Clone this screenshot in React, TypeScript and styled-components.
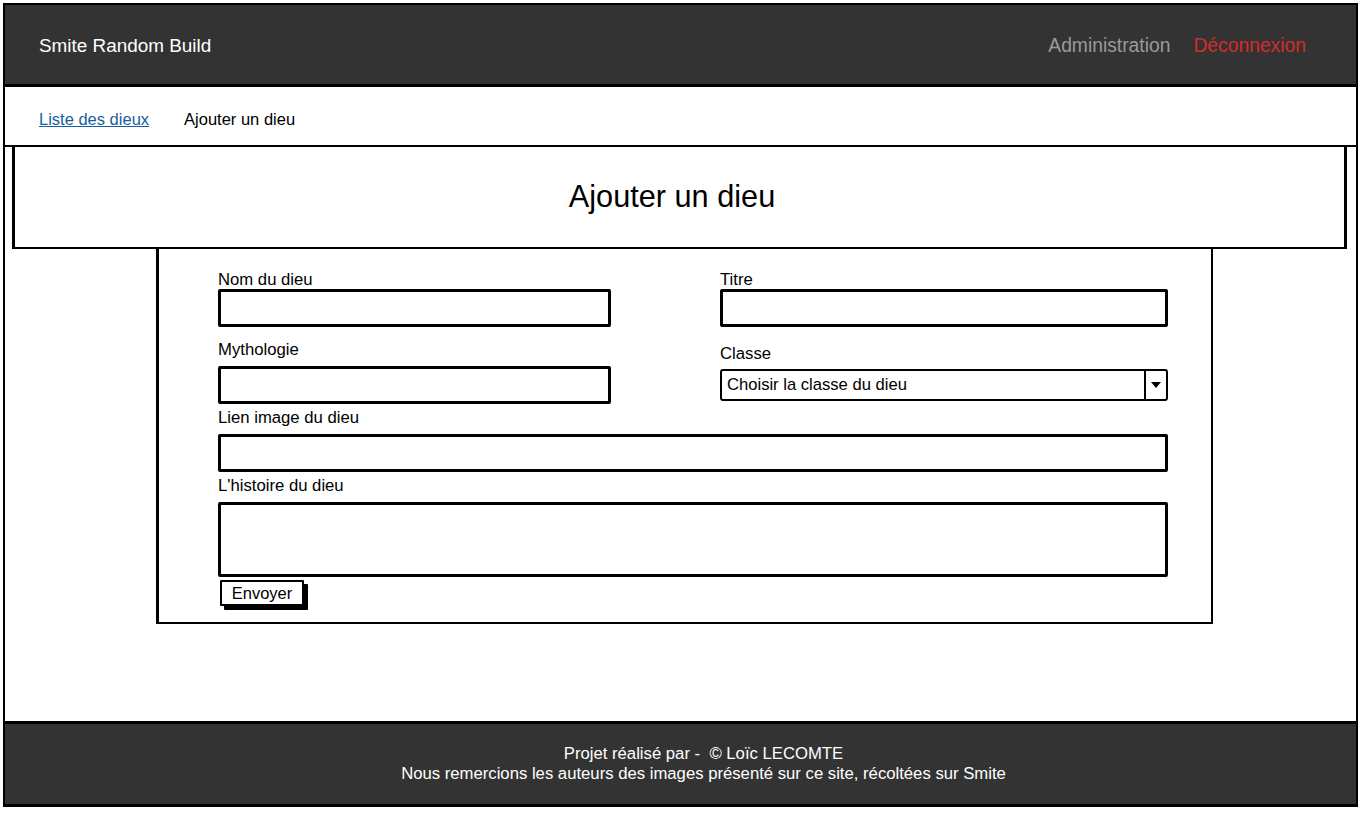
import React from "react";
import styled, { createGlobalStyle } from "styled-components";

const GlobalStyle = createGlobalStyle`
  html, body {
    margin: 0;
    padding: 0;
    background: #ffffff;
  }
  body {
    font-family: "Liberation Sans", Arial, sans-serif;
    color: #000;
  }
  * { box-sizing: border-box; }
`;

const Frame = styled.div`
  margin: 3px 0 0 3px;
  width: 1355px;
  height: 804px;
  border: 2px solid #000;
  border-bottom-width: 3px;
  display: flex;
  flex-direction: column;
  background: #fff;
`;

const Header = styled.header`
  height: 82px;
  flex: none;
  background: #333333;
  border-bottom: 3px solid #000;
  display: flex;
  align-items: center;
  justify-content: space-between;
  padding: 3px 50px 0 34px;
`;

const Brand = styled.div`
  color: #ffffff;
  font-size: 18.9px;
`;

const HeaderNav = styled.nav`
  display: flex;
  align-items: center;
  gap: 23px;
`;

const HeaderLink = styled.a<{ $tone: "muted" | "danger" }>`
  font-size: 19.3px;
  text-decoration: none;
  color: ${(p) => (p.$tone === "danger" ? "#d52b2b" : "#9a9a9a")};
`;

const SubNav = styled.nav`
  height: 60px;
  flex: none;
  border-bottom: 2px solid #000;
  display: flex;
  align-items: center;
  gap: 35px;
  padding: 6px 0 0 34px;
`;

const SubLink = styled.a<{ $active?: boolean }>`
  font-size: 16.5px;
  color: ${(p) => (p.$active ? "#000" : "#1b5e9e")};
  text-decoration: ${(p) => (p.$active ? "none" : "underline")};
`;

const Main = styled.main`
  flex: 1;
  display: flex;
  flex-direction: column;
`;

const TitleBox = styled.section`
  margin-left: 7px;
  width: 1335px;
  height: 102px;
  border: 3px solid #000;
  border-top: none;
  border-bottom-width: 2px;
  display: flex;
  align-items: center;
  justify-content: center;
  padding-right: 15px;
`;

const Title = styled.h1`
  margin: 0;
  font-size: 30.7px;
  font-weight: normal;
`;

const FormBox = styled.form`
  margin-left: 151px;
  width: 1057px;
  height: 375px;
  border: 2px solid #000;
  border-left-width: 3px;
  border-top: none;
  padding: 22px 0 0 59px;
  display: flex;
  flex-direction: column;
`;

const Columns = styled.div`
  display: grid;
  grid-template-columns: 393px 448px;
  column-gap: 109px;
  align-items: start;
`;

const Column = styled.div`
  display: flex;
  flex-direction: column;
`;

const Field = styled.div<{ $top?: number; $gap?: number; $width?: number }>`
  display: flex;
  flex-direction: column;
  margin-top: ${(p) => p.$top ?? 0}px;
  gap: ${(p) => p.$gap ?? 0}px;
  width: ${(p) => (p.$width ? `${p.$width}px` : "auto")};
`;

const Label = styled.label`
  font-size: 16.7px;
  line-height: 18px;
  height: 18px;
`;

const TextInput = styled.input`
  display: block;
  width: 100%;
  height: 38px;
  border: 3px solid #000;
  border-radius: 2px;
  background: #fff;
  padding: 0 6px;
  font: inherit;
  outline: none;
`;

const TextArea = styled.textarea`
  display: block;
  width: 100%;
  height: 75px;
  border: 3px solid #000;
  border-radius: 2px;
  background: #fff;
  padding: 4px 6px;
  font: inherit;
  resize: none;
  outline: none;
`;

const SelectBox = styled.div`
  height: 32px;
  border: 2px solid #000;
  border-radius: 3px;
  display: flex;
  align-items: stretch;
  background: #fff;
`;

const SelectText = styled.div`
  flex: 1;
  display: flex;
  align-items: center;
  padding-left: 5px;
  font-size: 16.6px;
`;

const SelectArrow = styled.div`
  width: 22px;
  border-left: 2px solid #000;
  display: flex;
  align-items: center;
  justify-content: center;
`;

const SubmitButton = styled.button`
  margin: 3px 0 0 2px;
  align-self: flex-start;
  width: 84px;
  height: 26px;
  border: 2px solid #000;
  border-radius: 1px;
  background: #fff;
  box-shadow: 4px 4px 0 #000;
  font-family: inherit;
  font-size: 16.5px;
  color: #000;
  padding: 0;
  cursor: pointer;
`;

const Footer = styled.footer`
  height: 83px;
  flex: none;
  background: #333333;
  border-top: 3px solid #000;
  color: #fff;
  display: flex;
  flex-direction: column;
  align-items: center;
  justify-content: center;
  padding: 0 0 1px 46px;
  font-size: 16.7px;
  line-height: 20px;
  white-space: pre;
`;

const Triangle = () => (
  <svg width="10" height="6" viewBox="0 0 10 6" aria-hidden="true">
    <path d="M0 0 H10 L5 6 Z" fill="#000" />
  </svg>
);

export default function App() {
  return (
    <>
      <GlobalStyle />
      <Frame>
        <Header>
          <Brand>Smite Random Build</Brand>
          <HeaderNav>
            <HeaderLink $tone="muted">Administration</HeaderLink>
            <HeaderLink $tone="danger">Déconnexion</HeaderLink>
          </HeaderNav>
        </Header>
        <SubNav>
          <SubLink href="#">Liste des dieux</SubLink>
          <SubLink $active>Ajouter un dieu</SubLink>
        </SubNav>
        <Main>
          <TitleBox>
            <Title>Ajouter un dieu</Title>
          </TitleBox>
          <FormBox onSubmit={(e) => e.preventDefault()}>
            <Columns>
              <Column>
                <Field>
                  <Label>Nom du dieu</Label>
                  <TextInput />
                </Field>
                <Field $top={14} $gap={7}>
                  <Label>Mythologie</Label>
                  <TextInput />
                </Field>
              </Column>
              <Column>
                <Field>
                  <Label>Titre</Label>
                  <TextInput />
                </Field>
                <Field $top={18} $gap={6}>
                  <Label>Classe</Label>
                  <SelectBox>
                    <SelectText>Choisir la classe du dieu</SelectText>
                    <SelectArrow>
                      <Triangle />
                    </SelectArrow>
                  </SelectBox>
                </Field>
              </Column>
            </Columns>
            <Field $top={5} $gap={7} $width={950}>
              <Label>Lien image du dieu</Label>
              <TextInput />
            </Field>
            <Field $top={5} $gap={7} $width={950}>
              <Label>L'histoire du dieu</Label>
              <TextArea />
            </Field>
            <SubmitButton type="submit">Envoyer</SubmitButton>
          </FormBox>
        </Main>
        <Footer>
          <div>Projet réalisé par -  © Loïc LECOMTE</div>
          <div>Nous remercions les auteurs des images présenté sur ce site, récoltées sur Smite</div>
        </Footer>
      </Frame>
    </>
  );
}
